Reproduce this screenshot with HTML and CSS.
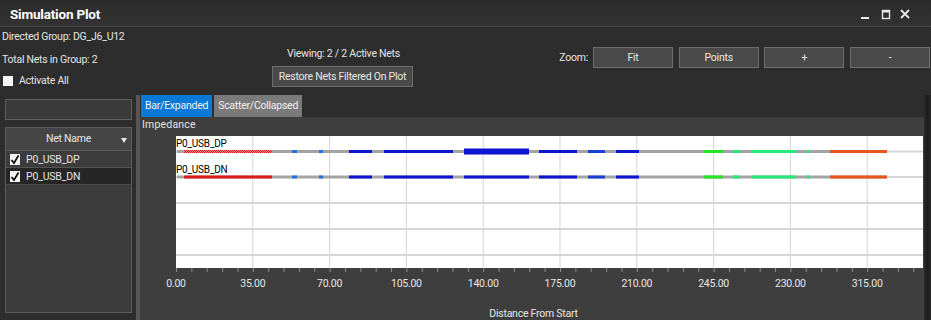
FILE: index.html
```html
<!DOCTYPE html>
<html lang="en">
<head>
<title>Simulation Plot</title>
<meta charset="UTF-8">
<link rel="stylesheet" href="styles.css">
</head>
<body>
<div class="window">
  <header class="titlebar">
    <span class="title">Simulation Plot</span>
    <div class="controls">
      <svg width="60" height="27" viewBox="0 0 60 27">
        <rect x="1" y="17" width="8" height="2" fill="#e8e8e8"/>
        <rect x="22.5" y="10.5" width="7" height="8" fill="none" stroke="#e8e8e8" stroke-width="1.4"/>
        <rect x="22" y="10" width="8" height="2.5" fill="#e8e8e8"/>
        <path d="M41 10 L49 18 M49 10 L41 18" stroke="#e8e8e8" stroke-width="1.8"/>
      </svg>
    </div>
  </header>

  <section class="toolbar">
    <div class="info">
      <div class="info-line">Directed Group: DG_J6_U12</div>
      <div class="info-line second">Total Nets in Group: 2</div>
      <div class="info-line check-row"><span class="box"></span>Activate All</div>
    </div>
    <div class="viewing">
      <div class="viewing-text">Viewing: 2 / 2 Active Nets</div>
      <button class="btn btn-restore">Restore Nets Filtered On Plot</button>
    </div>
    <div class="zoom">
      <span class="zoom-label">Zoom:</span>
      <div class="zoom-btns">
        <button class="btn">Fit</button>
        <button class="btn">Points</button>
        <button class="btn">+</button>
        <button class="btn">-</button>
      </div>
    </div>
  </section>

  <main class="main">
    <aside class="sidebar">
      <div class="search"></div>
      <div class="netlist">
        <div class="netlist-head">Net Name<span class="caret"></span></div>
        <div class="net-row">
          <svg class="tick-box" width="10" height="11" viewBox="0 0 10 11"><rect width="10" height="11" fill="#f4f4f4"/><path d="M1.5 6 L4 9 L8.5 1.5" fill="none" stroke="#000" stroke-width="1.6"/></svg>P0_USB_DP
        </div>
        <div class="net-row selected">
          <svg class="tick-box" width="10" height="11" viewBox="0 0 10 11"><rect width="10" height="11" fill="#f4f4f4"/><path d="M1.5 6 L4 9 L8.5 1.5" fill="none" stroke="#000" stroke-width="1.6"/></svg>P0_USB_DN
        </div>
      </div>
    </aside>
    <div class="splitter"></div>
    <section class="panel">
      <nav class="tabs">
        <span class="tab active">Bar/Expanded</span>
        <span class="tab">Scatter/Collapsed</span>
      </nav>
      <div class="panel-body">
        <div class="axis-name">Impedance</div>
        <svg class="chart" width="784" height="184" viewBox="0 0 784 184">
          <defs>
            <pattern id="ticks" x="36" y="0" width="15.36" height="4" patternUnits="userSpaceOnUse">
              <rect width="1" height="4" fill="#8c8c8c"/>
            </pattern>
            <pattern id="hatch" width="2" height="2" patternUnits="userSpaceOnUse">
              <rect width="2" height="2" fill="#f28a8a"/>
              <rect width="1" height="1" fill="#d81818"/>
              <rect x="1" y="1" width="1" height="1" fill="#d81818"/>
            </pattern>
          </defs>
          <rect x="36" y="0" width="747" height="132" fill="#ffffff"/>
          <g stroke="#d6d6d6" stroke-width="1">
            <line x1="112.8" y1="0" x2="112.8" y2="132"/>
            <line x1="189.6" y1="0" x2="189.6" y2="132"/>
            <line x1="266.4" y1="0" x2="266.4" y2="132"/>
            <line x1="343.2" y1="0" x2="343.2" y2="132"/>
            <line x1="420" y1="0" x2="420" y2="132"/>
            <line x1="496.8" y1="0" x2="496.8" y2="132"/>
            <line x1="573.6" y1="0" x2="573.6" y2="132"/>
            <line x1="650.4" y1="0" x2="650.4" y2="132"/>
            <line x1="727.2" y1="0" x2="727.2" y2="132"/>
          </g>
          <g stroke="#d6d6d6" stroke-width="2">
            <line x1="36" y1="15.5" x2="783" y2="15.5"/>
            <line x1="36" y1="41" x2="783" y2="41"/>
            <line x1="36" y1="67" x2="783" y2="67"/>
            <line x1="36" y1="93" x2="783" y2="93"/>
            <line x1="36" y1="119" x2="783" y2="119"/>
          </g>

          <!-- P0_USB_DP -->
          <g transform="translate(0,14)">
            <rect x="37" width="710" height="3" fill="#a3a3a3"/>
            <rect x="44" width="88" height="3" fill="url(#hatch)"/>
            <rect x="152" width="5" height="3" fill="#1e72e6"/>
            <rect x="179" width="4" height="3" fill="#1e72e6"/>
            <rect x="209" width="23" height="3" fill="#0c16d0"/>
            <rect x="244" width="69" height="3" fill="#0c16d0"/>
            <rect x="324" y="-1.5" width="65" height="6" fill="#0c16d0"/>
            <rect x="399" width="38" height="3" fill="#0c16d0"/>
            <rect x="448" width="17" height="3" fill="#1a3fd6"/>
            <rect x="476" width="23" height="3" fill="#0c16d0"/>
            <rect x="564" width="19" height="3" fill="#22e622"/>
            <rect x="593" width="7" height="3" fill="#26e87a"/>
            <rect x="612" width="44" height="3" fill="#26e87a"/>
            <rect x="667" width="3" height="3" fill="#26e87a"/>
            <rect x="690" width="57" height="3" fill="#e8561e"/>
          </g>
          <!-- P0_USB_DN -->
          <g transform="translate(0,39.5)">
            <rect x="37" width="710" height="3" fill="#a3a3a3"/>
            <rect x="44" width="88" height="3" fill="#e01a1a"/>
            <rect x="152" width="5" height="3" fill="#1e72e6"/>
            <rect x="179" width="4" height="3" fill="#1e72e6"/>
            <rect x="209" width="23" height="3" fill="#0c16d0"/>
            <rect x="244" width="69" height="3" fill="#0c16d0"/>
            <rect x="324" width="65" height="3" fill="#0c16d0"/>
            <rect x="399" width="38" height="3" fill="#0c16d0"/>
            <rect x="448" width="17" height="3" fill="#1a3fd6"/>
            <rect x="476" width="23" height="3" fill="#0c16d0"/>
            <rect x="564" width="19" height="3" fill="#22e622"/>
            <rect x="593" width="7" height="3" fill="#26e87a"/>
            <rect x="612" width="44" height="3" fill="#26e87a"/>
            <rect x="667" width="3" height="3" fill="#26e87a"/>
            <rect x="690" width="57" height="3" fill="#e8561e"/>
          </g>

          <text class="net-label" x="36" y="11">P0_USB_DP</text>
          <text class="net-label" x="36" y="37">P0_USB_DN</text>

          <rect x="36" y="132" width="747" height="4" fill="url(#ticks)"/>

          <g class="tick-label">
            <text x="36" y="151">0.00</text>
            <text x="112.8" y="151">35.00</text>
            <text x="189.6" y="151">70.00</text>
            <text x="266.4" y="151">105.00</text>
            <text x="343.2" y="151">140.00</text>
            <text x="420" y="151">175.00</text>
            <text x="496.8" y="151">210.00</text>
            <text x="573.6" y="151">245.00</text>
            <text x="650.4" y="151">230.00</text>
            <text x="727.2" y="151">315.00</text>
            <text x="393.5" y="181">Distance From Start</text>
          </g>
        </svg>
      </div>
    </section>
    <div class="edge"><span class="edge-bar"></span></div>
  </main>
</div>
</body>
</html>
```

FILE: styles.css
```css
body {
    margin: 0;
    background-color: #2d2d2d;
    font-family: Roboto, "Open Sans", sans-serif;
    font-size: 10.5px;
    letter-spacing: -0.25px;
    color: #e4e4e4;
}
.window {
    width: 931px;
    height: 320px;
    overflow: hidden;
    display: flex;
    flex-direction: column;
    background-color: #2d2d2d;
}
.titlebar {
    height: 26px;
    flex: none;
    display: flex;
    align-items: center;
    justify-content: space-between;
    background: linear-gradient(#2b2b2b, #323232);
    border-bottom: 1px solid #474747;
}
.title {
    padding-left: 10px;
    padding-top: 2px;
    font-size: 13.5px;
    font-weight: bold;
    color: #ffffff;
    letter-spacing: -0.2px;
}
.controls {
    height: 27px;
    padding-right: 11px;
}
.controls svg {
    display: block;
}

.toolbar {
    height: 68px;
    flex: none;
    display: flex;
}
.info {
    width: 270px;
    padding-left: 2px;
    padding-top: 2px;
}
.info-line {
    line-height: 16px;
    height: 16px;
    white-space: nowrap;
}
.info-line.second {
    margin-top: 7px;
}
.check-row {
    margin-top: 5px;
    display: flex;
    align-items: center;
}
.box {
    width: 10px;
    height: 10px;
    margin-left: 1px;
    margin-right: 6px;
    background-color: #f4f4f4;
}
.viewing {
    width: 143px;
    padding-top: 19px;
    display: flex;
    flex-direction: column;
    align-items: center;
}
.viewing-text {
    line-height: 16px;
    white-space: nowrap;
}
.btn {
    font-family: Roboto, "Open Sans", sans-serif;
    font-size: 10.5px;
    letter-spacing: -0.25px;
    color: #e8e8e8;
    background-color: #4a4a4a;
    border: 1px solid #6e6e6e;
    padding: 0;
    height: 21px;
    white-space: nowrap;
}
.btn-restore {
    margin-top: 4px;
    width: 141px;
    align-self: flex-start;
}
.zoom {
    margin-left: auto;
    padding-top: 20px;
    padding-right: 1px;
    display: flex;
    align-items: flex-start;
}
.zoom-label {
    line-height: 21px;
    margin-right: 5px;
}
.zoom-btns {
    display: grid;
    grid-template-columns: repeat(4, 80px);
    column-gap: 5.67px;
}

.main {
    flex: 1;
    display: flex;
    min-height: 0;
}
.sidebar {
    width: 127px;
    padding-left: 5px;
    padding-top: 4px;
    flex: none;
}
.search {
    height: 19px;
    border: 1px solid #5e5e5e;
    background-color: #3a3a3a;
}
.netlist {
    margin-top: 7px;
    height: 184px;
    border: 1px solid #5c5c5c;
    background-color: #3c3c3c;
}
.netlist-head {
    height: 22px;
    line-height: 22px;
    text-align: center;
    background-color: #454545;
    border-bottom: 1px solid #5a5a5a;
    position: relative;
}
.caret {
    position: absolute;
    right: 4px;
    top: 10px;
    width: 0;
    height: 0;
    border-left: 3px solid transparent;
    border-right: 3px solid transparent;
    border-top: 5px solid #e8e8e8;
}
.net-row {
    height: 16px;
    display: flex;
    align-items: center;
    border-bottom: 1px solid #555555;
    font-size: 10.5px;
    letter-spacing: -0.2px;
}
.net-row.selected {
    background-color: #262626;
    border-bottom-color: #4a4a4a;
}
.tick-box {
    flex: none;
    margin-left: 4px;
    margin-right: 6px;
}
.splitter {
    width: 4px;
    margin-left: 4px;
    background-color: #565656;
    flex: none;
}
.panel {
    width: 784px;
    flex: none;
    display: flex;
    flex-direction: column;
}
.tabs {
    height: 22px;
    flex: none;
    display: flex;
    padding-left: 1px;
    gap: 2px;
}
.tab {
    padding: 0 4px;
    line-height: 22px;
    background-color: #7a7a7a;
    color: #f0f0f0;
}
.tab.active {
    background-color: #0a78d6;
}
.panel-body {
    flex: 1;
    background-color: #3e3e3e;
}
.axis-name {
    height: 19px;
    line-height: 15px;
    padding-left: 2px;
    letter-spacing: 0.2px;
}
.chart {
    display: block;
}
.net-label {
    font-family: Roboto, "Open Sans", sans-serif;
    font-size: 10px;
    letter-spacing: -0.2px;
    fill: #000000;
}
.tick-label text {
    font-family: Roboto, "Open Sans", sans-serif;
    font-size: 10.5px;
    fill: #e6e6e6;
    text-anchor: middle;
}
.edge {
    flex: 1;
    background-color: #262626;
    display: flex;
    justify-content: center;
}
.edge-bar {
    width: 3px;
    background-color: #1e1e1e;
}
```
